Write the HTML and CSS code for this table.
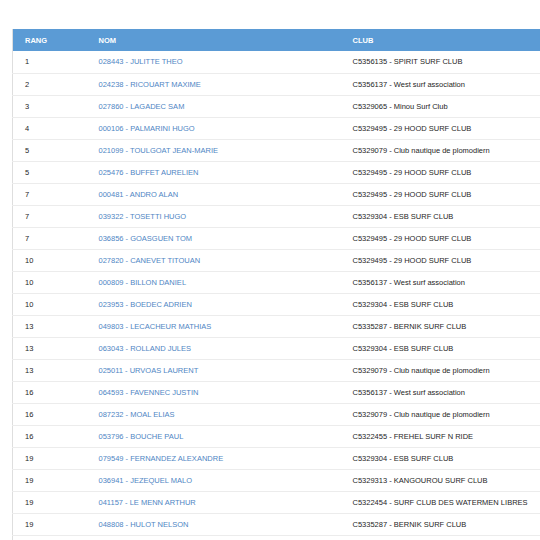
FILE: index.html
```html
<!DOCTYPE html>
<html lang="fr">
<head>
<meta charset="utf-8">
<title>Classement</title>
<link rel="stylesheet" href="styles.css">
</head>
<body>
<div class="wrap">
<table class="ranking">
<colgroup><col class="c-rang"><col class="c-nom"><col class="c-club"></colgroup>
<thead>
<tr><th>RANG</th><th>NOM</th><th>CLUB</th></tr>
</thead>
<tbody>
<tr><td>1</td><td><a>028443 - JULITTE THEO</a></td><td>C5356135 - SPIRIT SURF CLUB</td></tr>
<tr><td>2</td><td><a>024238 - RICOUART MAXIME</a></td><td>C5356137 - West surf association</td></tr>
<tr><td>3</td><td><a>027860 - LAGADEC SAM</a></td><td>C5329065 - Minou Surf Club</td></tr>
<tr><td>4</td><td><a>000106 - PALMARINI HUGO</a></td><td>C5329495 - 29 HOOD SURF CLUB</td></tr>
<tr><td>5</td><td><a>021099 - TOULGOAT JEAN-MARIE</a></td><td>C5329079 - Club nautique de plomodiern</td></tr>
<tr><td>5</td><td><a>025476 - BUFFET AURELIEN</a></td><td>C5329495 - 29 HOOD SURF CLUB</td></tr>
<tr><td>7</td><td><a>000481 - ANDRO ALAN</a></td><td>C5329495 - 29 HOOD SURF CLUB</td></tr>
<tr><td>7</td><td><a>039322 - TOSETTI HUGO</a></td><td>C5329304 - ESB SURF CLUB</td></tr>
<tr><td>7</td><td><a>036856 - GOASGUEN TOM</a></td><td>C5329495 - 29 HOOD SURF CLUB</td></tr>
<tr><td>10</td><td><a>027820 - CANEVET TITOUAN</a></td><td>C5329495 - 29 HOOD SURF CLUB</td></tr>
<tr><td>10</td><td><a>000809 - BILLON DANIEL</a></td><td>C5356137 - West surf association</td></tr>
<tr><td>10</td><td><a>023953 - BOEDEC ADRIEN</a></td><td>C5329304 - ESB SURF CLUB</td></tr>
<tr><td>13</td><td><a>049803 - LECACHEUR MATHIAS</a></td><td>C5335287 - BERNIK SURF CLUB</td></tr>
<tr><td>13</td><td><a>063043 - ROLLAND JULES</a></td><td>C5329304 - ESB SURF CLUB</td></tr>
<tr><td>13</td><td><a>025011 - URVOAS LAURENT</a></td><td>C5329079 - Club nautique de plomodiern</td></tr>
<tr><td>16</td><td><a>064593 - FAVENNEC JUSTIN</a></td><td>C5356137 - West surf association</td></tr>
<tr><td>16</td><td><a>087232 - MOAL ELIAS</a></td><td>C5329079 - Club nautique de plomodiern</td></tr>
<tr><td>16</td><td><a>053796 - BOUCHE PAUL</a></td><td>C5322455 - FREHEL SURF N RIDE</td></tr>
<tr><td>19</td><td><a>079549 - FERNANDEZ ALEXANDRE</a></td><td>C5329304 - ESB SURF CLUB</td></tr>
<tr><td>19</td><td><a>036941 - JEZEQUEL MALO</a></td><td>C5329313 - KANGOUROU SURF CLUB</td></tr>
<tr><td>19</td><td><a>041157 - LE MENN ARTHUR</a></td><td>C5322454 - SURF CLUB DES WATERMEN LIBRES</td></tr>
<tr><td>19</td><td><a>048808 - HULOT NELSON</a></td><td>C5335287 - BERNIK SURF CLUB</td></tr>
<tr><td>&nbsp;</td><td></td><td></td></tr>
</tbody>
</table>
</div>
</body>
</html>
```
FILE: styles.css
```css
html, body {
  margin: 0;
  padding: 0;
  background: #ffffff;
  overflow: hidden;
}
body {
  font-family: "Liberation Sans", Arial, sans-serif;
  font-size: 7.5px;
  color: #262626;
}
.wrap {
  padding: 29px 0 0 12px;
}
.ranking {
  border-collapse: collapse;
  table-layout: fixed;
  width: 528px;
  border-left: 1px solid #dedede;
}
.c-rang { width: 74px; }
.c-nom { width: 254px; }
.c-club { width: 200px; }
.ranking th {
  background: #5b9bd5;
  color: #ffffff;
  font-weight: bold;
  text-align: left;
  height: 22px;
  padding: 0 0 0 12px;
  box-sizing: border-box;
}
.ranking td {
  height: 22px;
  padding: 0 0 0 12px;
  border-bottom: 1px solid #ececec;
  box-sizing: border-box;
  white-space: nowrap;
  overflow: hidden;
  font-weight: 400;
}
.ranking td a {
  color: #4f86c4;
  text-decoration: none;
}
```
